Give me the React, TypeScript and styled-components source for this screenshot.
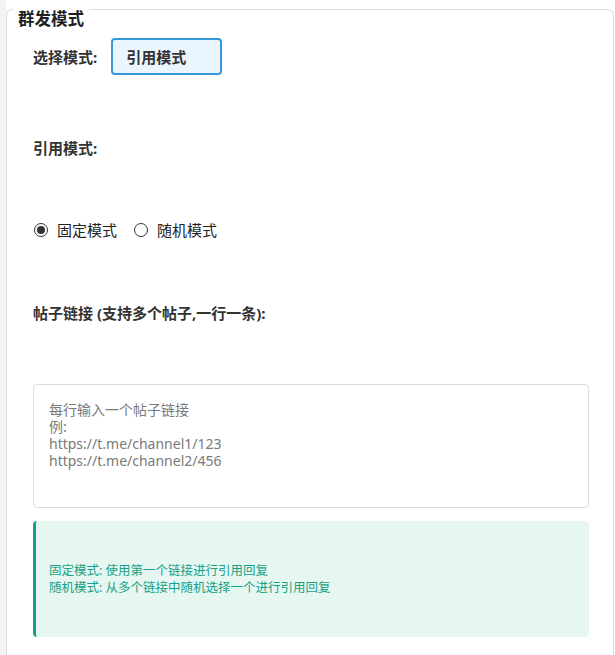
import React from "react";
import styled, { createGlobalStyle } from "styled-components";

const Global = createGlobalStyle`
  html, body { margin: 0; padding: 0; background: #ffffff; }
  body { font-family: "Noto Sans", "Noto Sans CJK SC", sans-serif; color: #333; }
  * { box-sizing: border-box; }
`;

const Page = styled.div`
  display: flex;
  min-height: 655px;
`;

const Strip = styled.div`
  width: 6px;
  flex: none;
  background: #f3f3f3;
`;

const Card = styled.section`
  flex: 1;
  margin-top: 9px;
  margin-right: 1px;
  border: 1px solid #dedede;
  border-bottom: none;
  border-radius: 6px 6px 0 0;
  background: #fff;
  padding-bottom: 40px;
`;

const Title = styled.h3`
  display: block;
  width: fit-content;
  margin: -2px 0 0 6px;
  padding: 0 5px;
  background: #fff;
  font-size: 16.5px;
  line-height: 22px;
  font-weight: 700;
  color: #1f1f1f;
`;

const Row = styled.div<{ $top: number }>`
  display: flex;
  align-items: center;
  gap: 14px;
  margin: ${(p) => p.$top}px 0 0 26px;
`;

const Label = styled.div`
  font-size: 15px;
  line-height: 20px;
  font-weight: 700;
  color: #333;
`;

const SelectBox = styled.div`
  width: 111px;
  height: 37px;
  border: 2px solid #3498db;
  border-radius: 4px;
  background: #ebf5fd;
  display: flex;
  align-items: center;
  padding-left: 13px;
  font-size: 15px;
  font-weight: 700;
  color: #333;
`;

const RadioGroup = styled.div`
  display: flex;
  align-items: center;
  gap: 17px;
  margin: 62px 0 0 27px;
`;

const RadioLabel = styled.label`
  display: flex;
  align-items: center;
  gap: 9px;
  font-size: 15px;
  line-height: 20px;
  color: #222;
`;

const Radio = styled.input`
  appearance: none;
  margin: 0;
  width: 14px;
  height: 14px;
  border: 1px solid #333;
  border-radius: 50%;
  display: grid;
  place-items: center;
  background: #fff;
  &::before {
    content: "";
    width: 8px;
    height: 8px;
    border-radius: 50%;
    background: #333;
    transform: scale(0);
  }
  &:checked::before { transform: scale(1); }
`;

const Block = styled.div<{ $top: number }>`
  margin: ${(p) => p.$top}px 24px 0 26px;
`;

const TextArea = styled.textarea`
  display: block;
  width: 100%;
  height: 124px;
  border: 1px solid #dcdcdc;
  border-radius: 4px;
  padding: 16px 15px;
  resize: none;
  font-family: "Noto Sans", "Noto Sans CJK SC", sans-serif;
  font-size: 14px;
  line-height: 17px;
  outline: none;
  &::placeholder { color: #7a7a7a; }
`;

const Info = styled.div`
  background: #e6f7f2;
  border-left: 3px solid #16a085;
  border-radius: 4px;
  height: 116px;
  padding: 0 15px 0 13px;
  display: flex;
  flex-direction: column;
  justify-content: center;
  font-size: 12.5px;
  line-height: 17px;
  color: #16a085;
`;

export default function App() {
  return (
    <>
      <Global />
      <Page>
        <Strip />
        <Card>
          <Title>群发模式</Title>
          <Row $top={8}>
            <Label>选择模式:</Label>
            <SelectBox>引用模式</SelectBox>
          </Row>
          <Row $top={63}>
            <Label>引用模式:</Label>
          </Row>
          <RadioGroup>
            <RadioLabel>
              <Radio type="radio" name="mode" defaultChecked />
              固定模式
            </RadioLabel>
            <RadioLabel>
              <Radio type="radio" name="mode" />
              随机模式
            </RadioLabel>
          </RadioGroup>
          <Row $top={63}>
            <Label>帖子链接 (支持多个帖子,一行一条):</Label>
          </Row>
          <Block $top={61}>
            <TextArea
              placeholder={"每行输入一个帖子链接\n例:\nhttps://t.me/channel1/123\nhttps://t.me/channel2/456"}
            />
          </Block>
          <Block $top={13}>
            <Info>
              <div>固定模式: 使用第一个链接进行引用回复</div>
              <div>随机模式: 从多个链接中随机选择一个进行引用回复</div>
            </Info>
          </Block>
        </Card>
      </Page>
    </>
  );
}
